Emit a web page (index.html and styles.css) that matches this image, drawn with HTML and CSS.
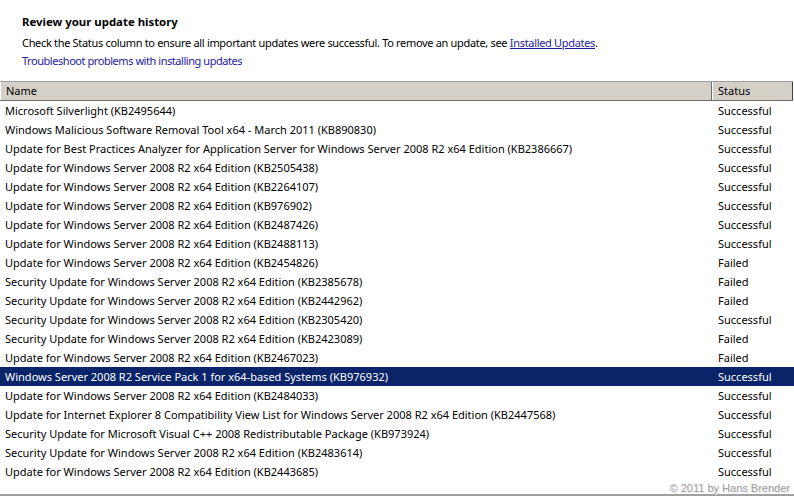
FILE: index.html
```html
<!DOCTYPE html>
<html>
<head>
<meta charset="utf-8">
<link rel="stylesheet" href="styles.css">
</head>
<body>
<div class="page">
  <div class="intro">
    <div class="title">Review your update history</div>
    <div class="desc">Check the Status column to ensure all important updates were successful. To remove an update, see <a class="ulink">Installed Updates</a>.</div>
    <div class="trouble">Troubleshoot problems with installing updates</div>
  </div>
  <div class="list">
    <div class="head">
      <div class="hcell hname">Name</div>
      <div class="hcell hstatus">Status</div>
    </div>
    <div class="rows">
      <div class="row"><span class="name">Microsoft Silverlight (KB2495644)</span><span class="status">Successful</span></div>
      <div class="row"><span class="name">Windows Malicious Software Removal Tool x64 - March 2011 (KB890830)</span><span class="status">Successful</span></div>
      <div class="row"><span class="name">Update for Best Practices Analyzer for Application Server for Windows Server 2008 R2 x64 Edition (KB2386667)</span><span class="status">Successful</span></div>
      <div class="row"><span class="name">Update for Windows Server 2008 R2 x64 Edition (KB2505438)</span><span class="status">Successful</span></div>
      <div class="row"><span class="name">Update for Windows Server 2008 R2 x64 Edition (KB2264107)</span><span class="status">Successful</span></div>
      <div class="row"><span class="name">Update for Windows Server 2008 R2 x64 Edition (KB976902)</span><span class="status">Successful</span></div>
      <div class="row"><span class="name">Update for Windows Server 2008 R2 x64 Edition (KB2487426)</span><span class="status">Successful</span></div>
      <div class="row"><span class="name">Update for Windows Server 2008 R2 x64 Edition (KB2488113)</span><span class="status">Successful</span></div>
      <div class="row"><span class="name">Update for Windows Server 2008 R2 x64 Edition (KB2454826)</span><span class="status">Failed</span></div>
      <div class="row"><span class="name">Security Update for Windows Server 2008 R2 x64 Edition (KB2385678)</span><span class="status">Failed</span></div>
      <div class="row"><span class="name">Security Update for Windows Server 2008 R2 x64 Edition (KB2442962)</span><span class="status">Failed</span></div>
      <div class="row"><span class="name">Security Update for Windows Server 2008 R2 x64 Edition (KB2305420)</span><span class="status">Successful</span></div>
      <div class="row"><span class="name">Security Update for Windows Server 2008 R2 x64 Edition (KB2423089)</span><span class="status">Failed</span></div>
      <div class="row"><span class="name">Update for Windows Server 2008 R2 x64 Edition (KB2467023)</span><span class="status">Failed</span></div>
      <div class="row selected"><span class="name">Windows Server 2008 R2 Service Pack 1 for x64-based Systems (KB976932)</span><span class="status">Successful</span></div>
      <div class="row"><span class="name">Update for Windows Server 2008 R2 x64 Edition (KB2484033)</span><span class="status">Successful</span></div>
      <div class="row"><span class="name">Update for Internet Explorer 8 Compatibility View List for Windows Server 2008 R2 x64 Edition (KB2447568)</span><span class="status">Successful</span></div>
      <div class="row"><span class="name">Security Update for Microsoft Visual C++ 2008 Redistributable Package (KB973924)</span><span class="status">Successful</span></div>
      <div class="row"><span class="name">Security Update for Windows Server 2008 R2 x64 Edition (KB2483614)</span><span class="status">Successful</span></div>
      <div class="row"><span class="name">Update for Windows Server 2008 R2 x64 Edition (KB2443685)</span><span class="status">Successful</span></div>
    </div>
    <div class="footer"><span class="copy">© 2011 by Hans Brender</span></div>
  </div>
</div>
</body>
</html>
```
FILE: styles.css
```css
html, body {
  margin: 0;
  padding: 0;
  background: #ffffff;
}
.page {
  width: 794px;
  height: 496px;
  overflow: hidden;
  font-family: "Noto Sans", "DejaVu Sans", sans-serif;
  font-size: 11px;
  color: #000000;
  display: flex;
  flex-direction: column;
}
.intro {
  padding: 13px 0 0 22px;
  height: 81px;
  box-sizing: border-box;
  flex: none;
}
.title {
  font-weight: bold;
  font-size: 11.4px;
  height: 18px;
  line-height: 18px;
}
.desc {
  margin-top: 3px;
  height: 18px;
  line-height: 18px;
  letter-spacing: -0.32px;
}
.ulink {
  color: #1c1ca0;
  text-decoration: underline;
}
.trouble {
  height: 18px;
  line-height: 18px;
  color: #1c1ca0;
  letter-spacing: -0.45px;
}
.list {
  display: flex;
  flex-direction: column;
  flex: 1;
}
.head {
  display: flex;
  height: 20px;
  flex: none;
  box-sizing: border-box;
  border-top: 1px solid #a0a0a0;
  border-bottom: 1px solid #6d6d6d;
  background: #d4d0c8;
  margin-right: 1px;
}
.hcell {
  line-height: 18px;
  box-sizing: border-box;
}
.hname {
  width: 712px;
  padding-left: 5px;
  border-left: 1px solid #ffffff;
  border-right: 1px solid #6d6d6d;
}
.hstatus {
  flex: 1;
  padding-left: 5px;
  border-left: 1px solid #ffffff;
  border-right: 1px solid #404040;
}
.rows {
  display: flex;
  flex-direction: column;
  flex: none;
}
.row {
  display: flex;
  height: 19px;
  line-height: 19px;
  white-space: nowrap;
}
.row .name {
  width: 713px;
  padding-left: 5px;
  box-sizing: border-box;
  overflow: hidden;
}
.row .status {
  padding-left: 5px;
}
.row.selected {
  background: #0a246a;
  color: #ffffff;
}
.footer {
  flex: 1;
  display: flex;
  justify-content: flex-end;
  align-items: flex-end;
  border-bottom: 2px solid #a0a0a0;
  padding-right: 4px;
}
.copy {
  font-family: "Liberation Sans", Arial, sans-serif;
  font-size: 11px;
  color: #a0a0a0;
  line-height: 11px;
  text-shadow: 1px 1px 0 #e8e8e8;
}
```
